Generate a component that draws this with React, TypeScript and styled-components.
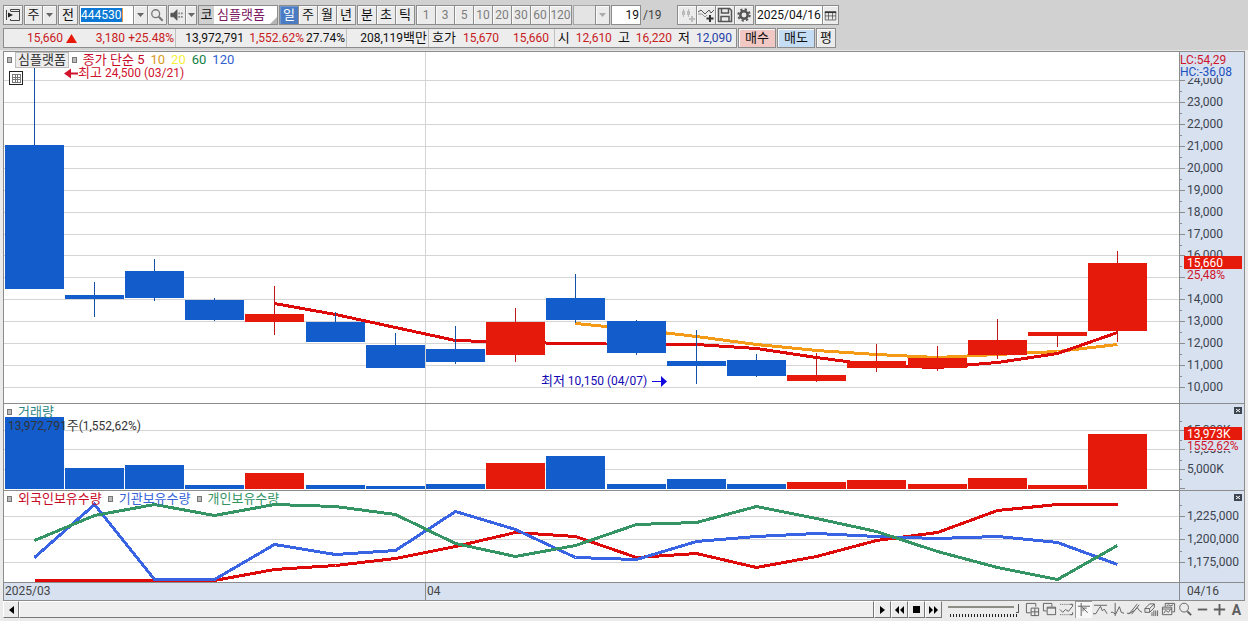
import React from "react";
import styled, { createGlobalStyle } from "styled-components";

const Global = createGlobalStyle`
  *, *::before, *::after { box-sizing: border-box; }
  body {
    margin: 0;
    background: #ebebeb;
    color: #111;
    font-family: Roboto, "Noto Sans CJK KR", sans-serif;
    font-size: 12px;
    line-height: 16px;
  }
  button, input, select { font: inherit; color: inherit; margin: 0; padding: 0; }
  svg { display: block; }
  svg text { font-size: 12px; }
`;

const RED = "#e61a0a";
const BLUE = "#125ccc";
const LINE = "#8c8c8c";
const GRID = "#d4d4d4";

/* ---------- layout ---------- */

const Page = styled.div`
  display: flex;
  flex-direction: column;
`;

const Header = styled.header`
  background: #d1d1d1;
  padding: 5px 3px 2px;
  border-bottom: 1px solid #e6e6e6;
  display: flex;
  flex-direction: column;
  gap: 3px;
`;

const Bar = styled.div`
  display: flex;
  align-items: stretch;
  height: 20px;
  white-space: nowrap;
`;

const Group = styled.div`
  display: flex;
  margin-right: 1px;
  > * + * { margin-left: -1px; }
`;

const Button = styled.button<{ $w?: number; $on?: boolean; $muted?: boolean; $bg?: string }>`
  width: ${(p) => p.$w ?? 20}px;
  border: 1px solid ${LINE};
  background: ${(p) => (p.$on ? "#4a7cc4" : p.$bg ?? "#ebebeb")};
  box-shadow: inset 1px 1px ${(p) => (p.$on ? "#6f98d2" : "#fafafa")};
  color: ${(p) => (p.$on ? "#fff" : p.$muted ? "#7d7d7d" : "#111")};
  font-size: ${(p) => (p.$muted ? 12 : 13)}px;
  display: flex;
  align-items: center;
  justify-content: center;
`;

const Field = styled.input<{ $w: number; $right?: boolean }>`
  width: ${(p) => p.$w}px;
  border: 1px solid ${LINE};
  border-radius: 0;
  background: #fff;
  padding: 0 1px;
  text-align: ${(p) => (p.$right ? "right" : "left")};
`;

const CodeBox = styled.label`
  width: 55px;
  border: 1px solid ${LINE};
  background: #fff;
  display: flex;
  align-items: center;
  padding-left: 1px;
`;

const CodeInput = styled.input`
  width: 42px;
  height: 14px;
  border: 0;
  border-right: 1px solid #e89a3c;
  background: #0a78d4;
  color: #fff;
`;

const NameBox = styled.div`
  width: 80px;
  border: 1px solid ${LINE};
  background: #fff;
  display: flex;
  align-items: center;
  color: #7a1460;
  font-size: 13px;
  gap: 3px;
`;

const Market = styled.span`
  width: 15px;
  height: 18px;
  line-height: 18px;
  background: #d0d0d0;
  color: #111;
  text-align: center;
`;

const Corner = styled.svg`
  margin-left: auto;
  align-self: flex-end;
`;

const PageTotal = styled.span`
  width: 36px;
  padding-left: 2px;
  line-height: 20px;
  color: #444;
`;

const Select = styled.select`
  appearance: none;
  width: 23px;
  border: 1px solid #a6a6a6;
  border-radius: 0;
  background: #e4e4e4;
`;

const Info = styled.dl`
  display: flex;
  margin: 0 1px 0 0;
  border: 1px solid ${LINE};
  background: #ededed;
`;

const Segment = styled.div<{ $w: number; $gap?: number; $pad?: number }>`
  width: ${(p) => p.$w}px;
  display: flex;
  align-items: center;
  justify-content: flex-end;
  gap: ${(p) => p.$gap ?? 0}px;
  padding-right: ${(p) => p.$pad ?? 1}px;
  & + & { border-left: 1px solid #c0c0c0; }
`;

const Value = styled.dd<{ $w?: number; $c?: string }>`
  margin: 0;
  width: ${(p) => (p.$w ? p.$w + "px" : "auto")};
  text-align: right;
  color: ${(p) => p.$c ?? "#111"};
`;

const Term = styled.dt`
  font-size: 13px;
`;

const Hangul = styled.span`
  font-size: 13px;
`;

const Triangle = styled.svg`
  margin-left: auto;
`;

/* ---------- chart ---------- */

const Frame = styled.main`
  margin: 0 3px;
  border: 1px solid ${LINE};
`;

const Row = styled.section<{ $h: number }>`
  display: grid;
  grid-template-columns: minmax(0, 1fr) 65px;
  height: ${(p) => p.$h}px;
  & + & { border-top: 1px solid ${LINE}; }
`;

const Plot = styled.div`
  display: grid;
  background: #fff;
  > * { grid-area: 1 / 1; }
`;

const Axis = styled.div`
  border-left: 1px solid ${LINE};
  background: #d7e1ef;
`;

const Legend = styled.div`
  display: flex;
  align-self: start;
  align-items: center;
  height: 16px;
  padding-left: 3px;
  gap: 6px;
  font-size: 13px;
  white-space: nowrap;
`;

const Mark = styled.i`
  width: 5px;
  height: 6px;
  border: 1px solid #777;
  background: #bbb;
`;

const Series = styled.span<{ $c: string }>`
  color: ${(p) => p.$c};
`;

const Periods = styled.span`
  display: flex;
  gap: 6px;
`;

const StockTag = styled.span`
  border: 1px solid #bdbdbd;
  background: #ececec;
  color: #333;
  line-height: 14px;
  padding: 0 2px;
  margin: 0 -3px;
`;

const Dates = styled.div`
  display: flex;
  background: #d7e1ef;
  color: #444;
`;

const DateCell = styled.div<{ $grow: number; $line?: boolean }>`
  flex: ${(p) => p.$grow} 1 0;
  padding-left: 1px;
  border-left: ${(p) => (p.$line ? `1px solid ${LINE}` : "0")};
`;

const DateAxis = styled(Axis)`
  color: #444;
  padding-left: 7px;
`;

/* ---------- footer ---------- */

const Footer = styled.footer`
  display: flex;
  align-items: stretch;
  height: 17px;
  margin: 0 3px;
  background: #ebebeb;
`;

const Small = styled.button<{ $w: number }>`
  width: ${(p) => p.$w}px;
  border: 1px solid;
  border-color: #fff #777 #777 #fff;
  background: #ececec;
  display: flex;
  align-items: center;
  justify-content: center;
`;

const Track = styled.div`
  flex: 1;
  background: #efefef;
  border: 1px solid;
  border-color: #fff #777 #777 #fff;
`;

const Speed = styled.input`
  appearance: none;
  width: 71px;
  height: 16px;
  margin: 0 5px 0 6px;
  background:
    linear-gradient(#8d8d85, #8d8d85) 0 5px / 66px 2px no-repeat,
    repeating-linear-gradient(90deg, #222 0 1px, transparent 1px 3px) 2px 13px / 67px 3px no-repeat;
  &::-webkit-slider-thumb {
    appearance: none;
    width: 3px;
    height: 9px;
    margin-top: -2px;
    border-right: 1px solid #555;
    border-bottom: 1px solid #555;
    background: #ebebeb;
  }
`;

const Tool = styled.button<{ $on?: boolean }>`
  width: 17px;
  border: 0;
  background: ${(p) => (p.$on ? "#f8f8f8" : "transparent")};
  box-shadow: ${(p) => (p.$on ? "inset 1px 1px #999" : "none")};
  color: #5e5e5e;
  font-size: 14px;
  display: flex;
  align-items: center;
  justify-content: center;
`;

/* ---------- icons ---------- */

const Icon = ({ children, size = 16, w = 1 }: { children: React.ReactNode; size?: number; w?: number }) => (
  <svg width={size} height={size} viewBox="0 0 16 16" fill="none" stroke="currentColor" strokeWidth={w} aria-hidden>
    {children}
  </svg>
);

const Down = ({ c = "#666" }: { c?: string }) => (
  <svg width="7" height="4" viewBox="0 0 7 4" aria-hidden><path d="M0 0h7L3.5 4z" fill={c} /></svg>
);

const tools: { name: string; on?: boolean; draw: React.ReactNode }[] = [
  { name: "차트 추가", draw: <><path d="M11.5 5V1.5h-10v10H6" /><path d="M6.500 6.500h8v8h-8zM10.500 6.500v8M6.500 10.500h8" /></> },
  { name: "창 복사", draw: <><path d="M5 9.500H1.500v-8h9V5" /><path d="M5.500 5.500h9v8h-9zM5.500 6.500h9" /></> },
  { name: "기간 이동", draw: <><path d="M1 2.500h13M1 13.500h13" strokeDasharray="1 1" /><path d="M1 8l3 3 3-3 3 2 4-5M12 2.500h2.500V5M12 13.500h2.500V11" /></> },
  { name: "십자선", on: true, draw: <><path d="M2 4.500h13M5.500 1v14" /><path d="M6.500 5.500l6 6M7.500 10V6.500h4" /></> },
  { name: "고저선", draw: <><path d="M1 3.500h14" /><path d="M0 12.500h3l3-5 2-3 2 5 2-2 3 5" /></> },
  { name: "세로선", draw: <><path d="M5.500 1v14" /><path d="M1 11h2l3 2 4-8 2 6 3 1" /></> },
  { name: "추세선", draw: <><path d="M2 13L11 2M5 13l8-10" /><path d="M0 12h3l5-3 3-3 2 3 3 2" /></> },
  { name: "지우개", draw: <><path d="M1 7l5-5h5v4l-5 5H1zM1 7h5l5-5M6 7v4" /><path d="M8.500 11v4M10.500 9v6M12.500 9v6M14.500 9v6" /></> },
  { name: "이미지 저장", draw: <><path d="M4.5 5V1.500h10v9H12M6 4l2-1 2 1 3-1" /><path d="M1.500 5.500h10v8h-10zM1.500 7.500h10M3 12l2-3 3 2 2-3" /></> },
  { name: "돋보기", draw: <><circle cx="6.500" cy="6" r="4.700" /><path d="M10 10l4 4" strokeWidth="2" /></> },
  { name: "축소", draw: <path d="M3 8h10" strokeWidth="2" /> },
  { name: "확대", draw: <path d="M2 8h12M8 2v12" strokeWidth="2" /> },
];

/* ---------- data ---------- */

const W = 1175;
const STARTS = [1, 61, 121, 181, 241, 302, 362, 422, 482, 542, 603, 663, 723, 783, 843, 904, 964, 1024, 1084];
const mid = (i: number) => STARTS[i] + 29.5;

// [up, body top, body bottom, high, low]
const candles: [number, number, number, number, number][] = [
  [0, 93, 237, 16, 237], [0, 243, 247, 230, 265], [0, 219, 246, 207, 249], [0, 248, 268, 246, 269],
  [1, 262, 270, 234, 283], [0, 270, 290, 260, 290], [0, 293, 316, 281, 316], [0, 297, 310, 274, 312],
  [1, 270, 303, 256, 310], [0, 246, 268, 222, 271], [0, 269, 301, 268, 303], [0, 309, 314, 278, 332],
  [0, 308, 324, 302, 325], [1, 323, 329, 301, 330], [1, 309, 316, 292, 320], [1, 306, 316, 294, 319],
  [1, 288, 303, 267, 307], [1, 280, 284, 280, 295], [1, 211, 279, 199, 290],
];
const volumes = [72, 21, 24, 4, 16, 4, 3, 5, 26, 33, 5, 10, 5, 7, 9, 5, 11, 4, 55];
const ma5 = [251, 262, 275, 288, 290, 291, 292, 292, 296, 305, 313, 315, 310, 301, 280];
const ma10 = [271, 277, 284, 292, 298, 302, 305, 302, 299, 292];
const foreign = [89, 89, 89, 89, 78, 74, 67, 55, 41, 45, 66, 62, 76, 65, 49, 41, 19, 13, 13];
const institution = [66, 13, 88, 88, 53, 63, 59, 20, 38, 66, 68, 50, 45, 42, 45, 47, 45, 51, 73];
const personal = [49, 24, 13, 24, 13, 15, 23, 52, 65, 54, 33, 31, 15, 27, 40, 60, 76, 88, 54];

const points = (ys: number[], from = 0) => ys.map((y, i) => `${mid(i + from)},${y + 0.5}`).join(" ");

const Curve = ({ ys, from, c }: { ys: number[]; from?: number; c: string }) => (
  <polyline points={points(ys, from)} fill="none" stroke={c} strokeWidth={3} vectorEffect="non-scaling-stroke" />
);

const Canvas = ({ h, grid, children, notes }: { h: number; grid: number[]; children: React.ReactNode; notes?: React.ReactNode }) => (
  <svg width="100%" height={h} role="img">
    <svg width="100%" height={h} viewBox={`0 0 ${W} ${h}`} preserveAspectRatio="none" shapeRendering="crispEdges">
      {grid.map((y) => <rect key={y} x={0} y={y} width={W} height={1} fill={GRID} />)}
      <rect x={421} y={0} width={1} height={h} fill={GRID} />
      {children}
    </svg>
    {notes}
  </svg>
);

const Scale = ({ h, major, minor, children }: { h: number; major: [number, string][]; minor: number[]; children?: React.ReactNode }) => (
  <svg width="64" height={h}>
    {major.map(([y, t]) => (
      <g key={y}>
        <rect x={0} y={y} width={5} height={1} fill={LINE} />
        {t && <text x={7} y={y + 4} fill="#3c4450">{t}</text>}
      </g>
    ))}
    {minor.map((y) => <rect key={y} x={0} y={y} width={2} height={1} fill={LINE} />)}
    {children}
  </svg>
);

const Close = () => (
  <g>
    <rect x={54} y={3} width={8} height={7} fill="#3c4450" />
    <path d="M56 5l4 3M60 5l-4 3" stroke="#fff" />
  </g>
);

const Tag = ({ y, label, rate }: { y: number; label: string; rate: string }) => (
  <g>
    <rect x={4} y={y} width={58} height={13} fill={RED} />
    <text x={7} y={y + 11} fill="#fff">{label}</text>
    <rect x={6} y={y + 13} width={56} height={11} fill="#d7e1ef" />
    <text x={7} y={y + 23} fill="#d0142c">{rate}</text>
  </g>
);

const priceY = (i: number) => Math.round(28 + i * 21.93);
const priceGrid = Array.from({ length: 15 }, (_, i) => priceY(i));
const priceLabels = priceGrid.map((y, i): [number, string] => [y, i === 9 ? "" : `${24 - i},000`]);

export default function App() {
  return (
    <Page>
      <Global />
      <Header>
        <Bar>
          <Group>
            <Button aria-label="메뉴">
              <Icon><path d="M5.500 4V2.500h9v11h-9V12M5.500 4.500h9" stroke="#444" /><path d="M1.500 3v10" stroke="#444" /><path d="M3 5.500v5l5-2.500z" fill="#222" stroke="none" /></Icon>
            </Button>
          </Group>
          <Group>
            <Button $w={19}>주</Button>
            <Button $w={15} aria-label="주 선택"><Down /></Button>
          </Group>
          <Group>
            <Button>전</Button>
          </Group>
          <Group>
            <CodeBox><CodeInput aria-label="종목코드" defaultValue="444530" /></CodeBox>
            <Button $w={15} aria-label="종목 목록"><Down /></Button>
            <Button aria-label="종목 검색">
              <Icon size={14}><circle cx="6.500" cy="6.500" r="4.500" stroke="#777" strokeWidth="1.500" /><path d="M10 10l4.500 4.500" stroke="#777" strokeWidth="2.500" /></Icon>
            </Button>
          </Group>
          <Group>
            <Button $w={18} aria-label="소리">
              <Icon size={14}><path d="M1 6h3l4-4v12l-4-4H1z" fill="#555" stroke="#555" /><path d="M10.500 5v2M10.500 9v2M13.500 5v2M13.500 9v2" stroke="#888" strokeWidth="2" /></Icon>
            </Button>
            <Button $w={12} aria-label="소리 선택"><Down /></Button>
          </Group>
          <Group>
            <NameBox>
              <Market>코</Market>심플랫폼
              <Corner width="7" height="7" viewBox="0 0 8 8" aria-hidden><path d="M8 0v8H0z" fill="#b5b5b5" /></Corner>
            </NameBox>
          </Group>
          <Group>
            {["일", "주", "월", "년"].map((t, i) => <Button key={t} $on={i === 0}>{t}</Button>)}
          </Group>
          <Group>
            {["분", "초", "틱"].map((t) => <Button key={t}>{t}</Button>)}
          </Group>
          <Group>
            {[1, 3, 5, 10, 20, 30, 60, 120].map((t) => <Button key={t} $muted $w={t === 120 ? 23 : 20}>{t}</Button>)}
          </Group>
          <Group>
            <Select aria-label="분 단위"><option></option></Select>
            <Button $w={15} aria-label="분 단위 목록"><Down c="#aaa" /></Button>
          </Group>
          <Field $w={30} $right aria-label="봉 개수" defaultValue="19" />
          <PageTotal>/19</PageTotal>
          <Group>
            <Button aria-label="캔들 추가">
              <Icon><path d="M4.500 2v8M9.500 2v8" stroke="#bbb" /><path d="M4.500 4v4M9.500 4v4" stroke="#bbb" strokeWidth="3" /><path d="M13 9v6M10 12h6" stroke="#bbb" strokeWidth="2" /></Icon>
            </Button>
            <Button aria-label="지표 추가">
              <Icon><path d="M0 5l3-2 4 4 4-4 2 3 3-3" stroke="#555" /><path d="M0 7l4 0 3 3 2-2" stroke="#999" /><path d="M12 8v7M8.500 11.500h7" stroke="#333" strokeWidth="2" /></Icon>
            </Button>
            <Button aria-label="저장">
              <Icon w={1.5}><path d="M1.500 1.500h11l2 2v11h-13z" stroke="#555" /><path d="M4.500 2v4h7V2M4 14V9.500h8V14" stroke="#555" /></Icon>
            </Button>
            <Button aria-label="설정">
              <Icon><circle cx="8" cy="8" r="3.700" stroke="#555" strokeWidth="2.500" /><circle cx="8" cy="8" r="5.700" stroke="#555" strokeWidth="2" strokeDasharray="2.200 2.280" /></Icon>
            </Button>
          </Group>
          <Group>
            <Field $w={68} aria-label="날짜" defaultValue="2025/04/16" />
            <Button $w={17} aria-label="달력">
              <Icon size={13}><path d="M1.500 3.500h13v10h-13zM5.500 4v9M10.500 4v9M1.500 8.500h13" stroke="#555" /><path d="M1 4h14" stroke="#333" strokeWidth="2" /></Icon>
            </Button>
          </Group>
        </Bar>
        <Bar>
          <Info>
            <Segment $w={171}>
              <Value $c="#c8201c">15,660</Value>
              <Value $w={14}>
                <Triangle width="11" height="9" viewBox="0 0 11 9" aria-label="상승"><path d="M5.500 0L11 9H0z" fill={RED} /></Triangle>
              </Value>
              <Value $w={48} $c="#c8201c">3,180</Value>
              <Value $w={49} $c="#c8201c">+25.48%</Value>
            </Segment>
            <Segment $w={171}>
              <Value>13,972,791</Value>
              <Value $w={60} $c="#c8201c">1,552.62%</Value>
              <Value $w={41}>27.74%</Value>
            </Segment>
            <Segment $w={82}><Value>208,119<Hangul>백만</Hangul></Value></Segment>
            <Segment $w={126} $pad={5}>
              <Term>호가</Term>
              <Value $w={43} $c="#c8201c">15,670</Value>
              <Value $w={50} $c="#c8201c">15,660</Value>
            </Segment>
            <Segment $w={182} $gap={6} $pad={4}>
              <Term>시</Term><Value $c="#c8201c">12,610</Value>
              <Term>고</Term><Value $c="#c8201c">16,220</Value>
              <Term>저</Term><Value $c="#2440a8">12,090</Value>
            </Segment>
          </Info>
          <Group><Button $w={38} $bg="#f2c8c4">매수</Button></Group>
          <Group><Button $w={38} $bg="#c4dcf4">매도</Button></Group>
          <Group><Button>평</Button></Group>
        </Bar>
      </Header>

      <Frame>
        <Row $h={351}>
          <Plot>
            <Canvas
              h={351}
              grid={priceGrid}
              notes={
                <>
                  <g fill="#d0142c">
                    <path d="M60 21.500l7-5v4h7v2h-7v4z" />
                    <text x={74} y={25}><tspan fontSize="13">최고</tspan> 24,500 (03/21)</text>
                  </g>
                  <svg x="45.700%" y="0" overflow="visible">
                    <text x={0} y={333} fill="#1408b4"><tspan fontSize="13">최저</tspan> 10,150 (04/07)</text>
                    <path d="M111 329.500h10" stroke="#1408e0" />
                    <path d="M120 324l6 5.500-6 5.500z" fill="#1408e0" />
                  </svg>
                  <g stroke="#222" fill="none" shapeRendering="crispEdges">
                    <rect x={5.5} y={19.5} width={13} height={13} fill="#fff" />
                    <path d="M8 22.500h8M8 25.500h8M8 27.500h8M8 30.500h8M8.500 22v9M11.500 22v9M13.500 22v9M16.500 22v9" stroke="#777" />
                  </g>
                </>
              }
            >
              <Curve ys={ma10} from={9} c="#f49a14" />
              <Curve ys={ma5} from={4} c="#de0a0a" />
              {candles.map(([up, top, bottom, high, low], i) => (
                <g key={i} fill={up ? RED : BLUE}>
                  <rect x={STARTS[i] + 29} y={high} width={1} height={low - high} fill={up ? "#c01818" : "#1450a4"} />
                  <rect x={STARTS[i]} y={top} width={59} height={bottom - top} />
                </g>
              ))}
            </Canvas>
            <Legend>
              <Mark />
              <StockTag>심플랫폼</StockTag>
              <Mark />
              <Periods>
                <Series $c="#c80a28">종가 단순 5</Series>
                <Series $c="#d89820">10</Series>
                <Series $c="#f8f03c">20</Series>
                <Series $c="#148044">60</Series>
                <Series $c="#3060d0">120</Series>
              </Periods>
            </Legend>
          </Plot>
          <Axis>
            <Scale h={351} major={priceLabels} minor={priceGrid.slice(0, -1).map((y) => y + 11)}>
              <rect x={0} y={0} width={64} height={26} fill="#d7e1ef" />
              <text x={0} y={12} fill="#d0142c">LC:54,29</text>
              <text x={0} y={24} fill="#1c50c0">HC:-36,08</text>
              <Tag y={204} label="15,660" rate="25,48%" />
            </Scale>
          </Axis>
        </Row>

        <Row $h={87}>
          <Plot>
            <Canvas
              h={86}
              grid={[26, 45, 65]}
              notes={<text x={4} y={26} fill="#333">13,972,791<tspan fontSize="13">주</tspan>(1,552,62%)</text>}
            >
              {volumes.map((v, i) => (
                <rect key={i} x={STARTS[i]} y={85 - v} width={59} height={v} fill={candles[i][0] ? RED : BLUE} />
              ))}
            </Canvas>
            <Legend><Mark /><Series $c="#2c8484">거래량</Series></Legend>
          </Plot>
          <Axis>
            <Scale h={86} major={[[26, "15,000K"], [45, "10,000K"], [65, "5,000K"], [84, ""]]} minor={[17, 36, 56, 75]}>
              <Tag y={23} label="13,973K" rate="1552,62%" />
              <Close />
            </Scale>
          </Axis>
        </Row>

        <Row $h={92}>
          <Plot>
            <Canvas h={91} grid={[25, 48, 71]}>
              <Curve ys={foreign} c="#de0a0a" />
              <Curve ys={institution} c="#3864e4" />
              <Curve ys={personal} c="#349464" />
            </Canvas>
            <Legend>
              <Mark /><Series $c="#c80a28">외국인보유수량</Series>
              <Mark /><Series $c="#3864d8">기관보유수량</Series>
              <Mark /><Series $c="#349464">개인보유수량</Series>
            </Legend>
          </Plot>
          <Axis>
            <Scale h={91} major={[[25, "1,225,000"], [48, "1,200,000"], [71, "1,175,000"]]} minor={[14, 37, 60]}>
              <Close />
            </Scale>
          </Axis>
        </Row>

        <Row $h={18}>
          <Dates>
            <DateCell $grow={421}>2025/03</DateCell>
            <DateCell $grow={754} $line>04</DateCell>
          </Dates>
          <DateAxis>04/16</DateAxis>
        </Row>
      </Frame>

      <Footer>
        <Small $w={16} aria-label="왼쪽"><svg width="5" height="8" viewBox="0 0 5 8"><path d="M5 0v8L0 4z" /></svg></Small>
        <Track />
        <Small $w={17} aria-label="재생"><svg width="5" height="8" viewBox="0 0 5 8"><path d="M0 0v8l5-4z" /></svg></Small>
        <Small $w={17} aria-label="뒤로"><svg width="9" height="8" viewBox="0 0 9 8"><path d="M4 0v8L0 4zM9 0v8L5 4z" /></svg></Small>
        <Small $w={17} aria-label="정지"><svg width="7" height="7" viewBox="0 0 7 7"><path d="M0 0h7v7H0z" /></svg></Small>
        <Small $w={17} aria-label="앞으로"><svg width="9" height="8" viewBox="0 0 9 8"><path d="M0 0v8l4-4zM5 0v8l4-4z" /></svg></Small>
        <Speed type="range" aria-label="재생 속도" min={0} max={100} defaultValue={100} />
        {tools.map((t) => (
          <Tool key={t.name} aria-label={t.name} $on={t.on}><Icon size={15}>{t.draw}</Icon></Tool>
        ))}
        <Tool aria-label="글꼴"><b>A</b></Tool>
      </Footer>
    </Page>
  );
}
